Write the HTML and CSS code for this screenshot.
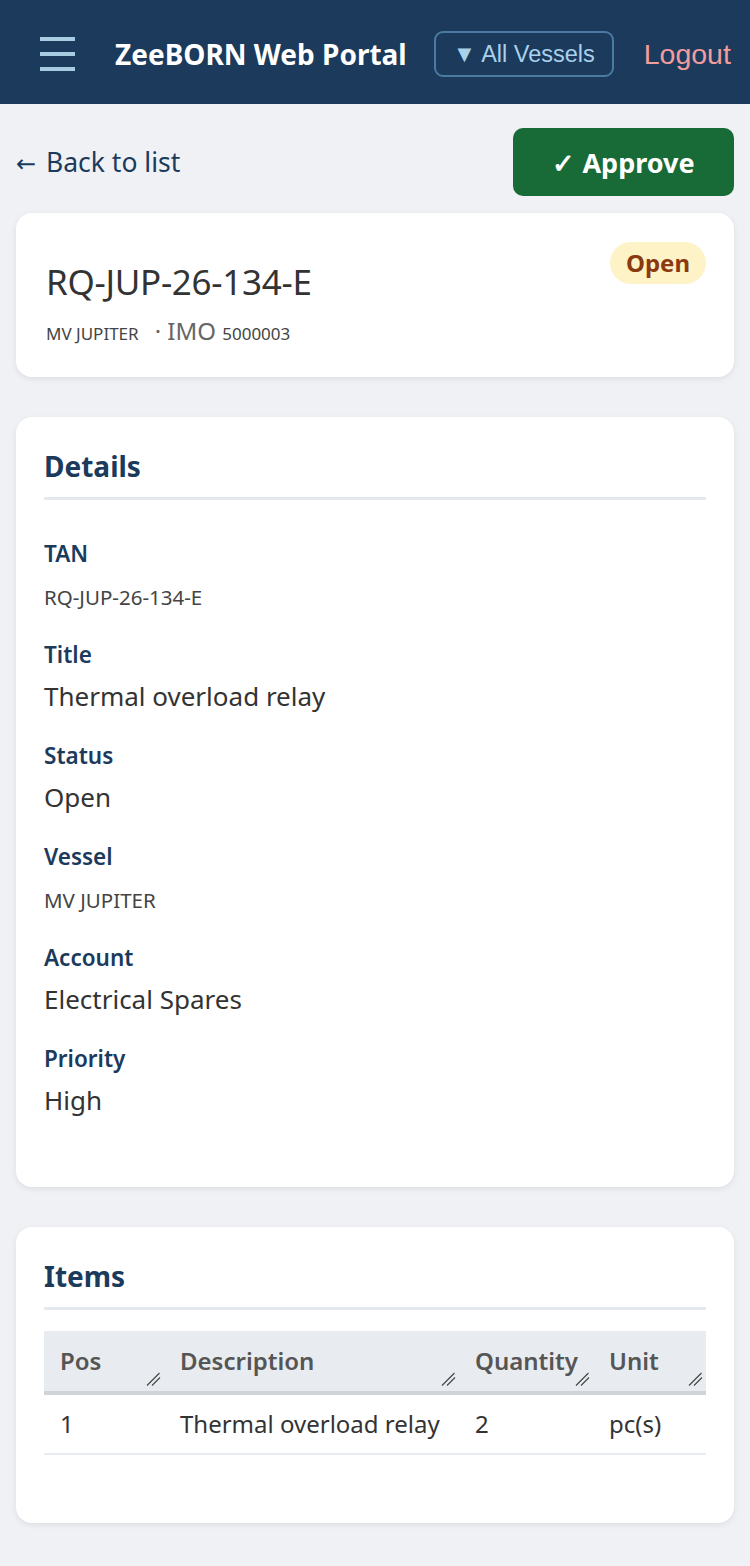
FILE: index.html
```html
<!DOCTYPE html>
<html lang="en">
<head>
<meta charset="utf-8">
<title>ZeeBORN Web Portal</title>
<link rel="stylesheet" href="styles.css">
</head>
<body>
<header class="topbar">
  <button class="menu" aria-label="Menu"><span></span><span></span><span></span></button>
  <h1 class="brand">ZeeBORN Web Portal</h1>
  <button class="vessel-filter">▼ All Vessels</button>
  <button class="logout">Logout</button>
</header>
<main class="page">
  <div class="toolbar">
    <a class="back" href="#"><span class="arrow">←</span> Back to list</a>
    <button class="approve">✓ Approve</button>
  </div>

  <section class="card summary">
    <div class="summary-main">
      <h2 class="req-id">RQ-JUP-26-134-E</h2>
      <div class="req-sub"><span class="small">MV JUPITER</span><span class="imo">· IMO</span> <span class="small">5000003</span></div>
    </div>
    <span class="badge">Open</span>
  </section>

  <section class="card">
    <h3 class="card-title">Details</h3>
    <dl class="fields">
      <div class="field"><dt>TAN</dt><dd><span class="small">RQ-JUP-26-134-E</span></dd></div>
      <div class="field"><dt>Title</dt><dd>Thermal overload relay</dd></div>
      <div class="field"><dt>Status</dt><dd>Open</dd></div>
      <div class="field"><dt>Vessel</dt><dd><span class="small">MV JUPITER</span></dd></div>
      <div class="field"><dt>Account</dt><dd>Electrical Spares</dd></div>
      <div class="field"><dt>Priority</dt><dd>High</dd></div>
    </dl>
  </section>

  <section class="card">
    <h3 class="card-title">Items</h3>
    <div class="table-wrap">
      <table class="items">
        <colgroup>
          <col class="c-pos"><col class="c-desc"><col class="c-qty"><col class="c-unit">
        </colgroup>
        <thead>
          <tr><th>Pos</th><th>Description</th><th>Quantity</th><th>Unit</th></tr>
        </thead>
        <tbody>
          <tr><td>1</td><td>Thermal overload relay</td><td>2</td><td>pc(s)</td></tr>
        </tbody>
      </table>
    </div>
  </section>
</main>
</body>
</html>
```

FILE: styles.css
```css
* { box-sizing: border-box; }
html, body { margin: 0; padding: 0; }
body {
  background: #eff1f5;
  font-family: "Noto Sans", "Open Sans", sans-serif;
  color: #333;
  width: 750px;
  min-height: 1566px;
}

.topbar {
  height: 104px;
  background: #1b3a5c;
  display: flex;
  align-items: center;
  padding: 4px 0 0 40px;
}
.menu {
  width: 35px;
  height: 34px;
  padding: 0;
  border: 0;
  background: none;
  display: flex;
  flex-direction: column;
  justify-content: space-between;
  margin-right: 40px;
}
.menu span {
  display: block;
  height: 4px;
  width: 35px;
  background: #a8cce2;
}
.brand {
  margin: 0;
  color: #fff;
  font-size: 28px;
  font-weight: 700;
  line-height: 36px;
}
.vessel-filter {
  margin-left: 27px;
  height: 46px;
  width: 180px;
  border: 2px solid #4b7aa0;
  border-radius: 9px;
  background: transparent;
  color: #a9d1ec;
  font-family: "Liberation Sans", Arial, sans-serif;
  font-size: 23.5px;
  padding: 0;
}
.logout {
  margin-left: 30px;
  border: 0;
  background: none;
  padding: 0;
  color: #f29c9c;
  font-family: "Liberation Sans", Arial, sans-serif;
  font-size: 28.5px;
}

.page { padding: 24px 16px 44px; }

.toolbar {
  display: flex;
  justify-content: space-between;
  align-items: center;
  margin-bottom: 17px;
}
.back {
  color: #1b3a5c;
  text-decoration: none;
  font-size: 26.5px;
}
.arrow {
  font-family: "DejaVu Sans", sans-serif;
  font-size: 24px;
  margin-right: 3px;
}
.approve {
  width: 221px;
  height: 68px;
  border: 0;
  border-radius: 10px;
  background: #186a36;
  color: #fff;
  font-family: "Noto Sans", sans-serif;
  font-size: 27px;
  font-weight: 700;
}

.card {
  background: #fff;
  border-radius: 16px;
  box-shadow: 0 2px 6px rgba(0, 0, 0, 0.08);
  padding: 28px;
  margin-bottom: 40px;
}

.summary {
  display: flex;
  justify-content: space-between;
  align-items: flex-start;
  padding: 29px 28px 29px 30px;
}
.req-id {
  margin: 20px 0 0;
  font-size: 35px;
  font-weight: 400;
  line-height: 40px;
  color: #333;
  letter-spacing: -0.3px;
}
.req-sub {
  margin-top: 15px;
  font-size: 24px;
  line-height: 28px;
  color: #666;
}
.small { font-size: 17px; color: #444; }
.imo { margin-left: 16px; }
.badge {
  background: #fef3c7;
  color: #8b3a0f;
  font-weight: 700;
  font-size: 24px;
  line-height: 42px;
  padding: 0 16px;
  border-radius: 21px;
}

.card-title {
  margin: 5px 0 0;
  font-size: 28px;
  font-weight: 700;
  line-height: 32px;
  color: #1b3a5c;
  padding-bottom: 15px;
  border-bottom: 3px solid #e5e8ee;
}

.fields { margin: 39px 0 43px; }
.field { margin-bottom: 29px; }
.field:last-child { margin-bottom: 0; }
.field dt {
  font-size: 22.5px;
  font-weight: 600;
  line-height: 29px;
  color: #1b3a5c;
  margin-bottom: 12px;
}
.field dd {
  margin: 0;
  font-size: 26px;
  line-height: 31px;
  height: 31px;
  color: #333;
}
.field dd .small {
  font-size: 20.5px;
  line-height: 1;
}

.table-wrap {
  margin: 21px 0 40px;
  overflow: hidden;
}
.items {
  width: 100%;
  border-collapse: collapse;
  table-layout: fixed;
}
.c-pos { width: 120px; }
.c-desc { width: 295px; }
.c-qty { width: 134px; }
.c-unit { width: 113px; }
.items th {
  position: relative;
  background: #e8ebef;
  color: #555;
  font-size: 24px;
  font-weight: 600;
  text-align: left;
  padding: 14px 10px 14px 16px;
  line-height: 32px;
  border-bottom: 4px solid #d0d4d9;
  white-space: nowrap;
  overflow: visible;
}
.items th::after {
  content: "";
  position: absolute;
  right: 3px;
  bottom: 5px;
  width: 15px;
  height: 15px;
  background: url("data:image/svg+xml,%3Csvg xmlns='http://www.w3.org/2000/svg' width='15' height='15'%3E%3Cpath d='M1 14.5 L13.5 2 M6 14.5 L14 6.5' stroke='%23444' stroke-width='1.1' fill='none'/%3E%3C/svg%3E") no-repeat;
}
.items td {
  font-size: 24px;
  color: #333;
  padding: 13px 10px 13px 16px;
  line-height: 32px;
  border-bottom: 2px solid #e8ebef;
  white-space: nowrap;
}
```
